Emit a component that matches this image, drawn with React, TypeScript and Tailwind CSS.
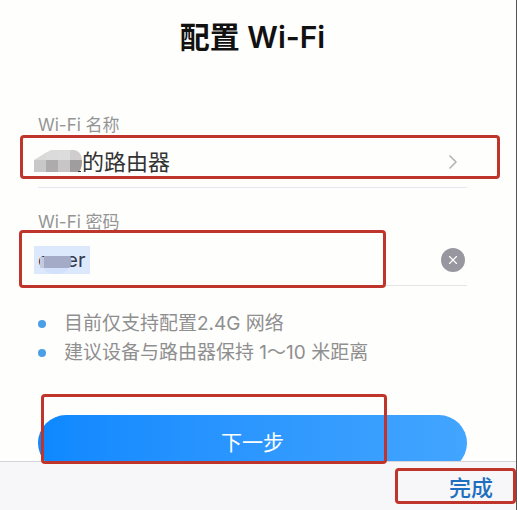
import { useState } from 'react';
import { ChevronRight, X } from 'lucide-react';

const tips = ['目前仅支持配置2.4G 网络', '建议设备与路由器保持 1～10 米距离'];

// red frame that points out a step of the guide
function Highlight({ className }: { className: string }) {
  return <div className={`pointer-events-none absolute z-20 rounded-sm border-3 border-[#c0352b] ${className}`} />;
}

function NameMosaic() {
  return (
    <svg className="h-6 w-12 shrink-0" viewBox="0 0 48 24" aria-hidden="true">
      <clipPath id="name-blob">
        <path d="M0 22V10C6 7 10 3 17 0H40C46 1 48 6 48 11C48 16 47 19 45 22Z" />
      </clipPath>
      <g clipPath="url(#name-blob)">
        <rect width="12" height="24" fill="#d9d9d9" />
        <rect x="12" width="12" height="24" fill="#dcdbdc" />
        <rect x="24" width="12" height="24" fill="#dddcdd" />
        <rect x="36" width="12" height="24" fill="#cfcdce" />
        <rect y="10" width="12" height="14" fill="#c9c8c9" />
        <rect x="12" y="10" width="12" height="14" fill="#adabac" />
        <rect x="24" y="10" width="12" height="14" fill="#c7c5c6" />
        <rect x="36" y="10" width="12" height="14" fill="#a09d9f" />
      </g>
      <path d="M44 21h3v1h-3z" fill="#333" />
    </svg>
  );
}

function PasswordMosaic() {
  return (
    <svg className="pointer-events-none absolute top-2 left-1 h-5 w-9" viewBox="0 0 36 20" aria-hidden="true">
      <path d="M5 14H31C28 19 23 20 18 20S8 19 5 14Z" fill="#d3e1fa" />
      <path d="M2 3H6V14H2Z" fill="#c3cbe2" />
      <path d="M6 2H32C34 4 34 12 31 14H6Z" fill="#a3abc6" />
    </svg>
  );
}

export default function App() {
  const [password, setPassword] = useState('c\u00a0\u00a0\u00a0er');

  return (
    <div className="relative h-screen overflow-hidden border-r border-[#555] bg-[#fefefd] font-['Inter','Noto_Sans_CJK_SC',sans-serif]">
      <main className="pt-4 pr-[49px] pl-[38px]">
        <h1 className="text-center text-[30px] leading-[42px] font-semibold text-[#111]">配置 Wi-Fi</h1>

        <form className="pt-[55px]" onSubmit={(e) => e.preventDefault()}>
          <label htmlFor="network" className="block text-[17px] leading-6 text-[#959595]">Wi-Fi 名称</label>
          <div className="relative border-b border-[#e4e7ef]">
            <button id="network" type="button" className="-ml-1 flex h-[50px] w-full items-center text-[22px] text-[#333]">
              <NameMosaic />
              <span>的路由器</span>
              <ChevronRight className="-mr-0.5 ml-auto size-6 text-[#b5b5b5]" strokeWidth={1.75} />
            </button>
            <Highlight className="-top-0.5 -right-[33px] -left-[18px] h-11" />
          </div>

          <label htmlFor="password" className="mt-[22px] block text-[17px] leading-6 text-[#959595]">Wi-Fi 密码</label>
          <div className="relative flex h-[52px] items-center justify-between border-b border-[#e5e5e8]">
            <div className="relative -ml-1">
              <input
                id="password"
                type="text"
                value={password}
                onChange={(e) => setPassword(e.target.value)}
                className="block h-7 w-14 bg-[#dce8fb] px-1 text-xl text-[#353a4d] outline-none"
              />
              <PasswordMosaic />
            </div>
            <button
              type="button"
              aria-label="清除"
              onClick={() => setPassword('')}
              className="mr-0.5 flex size-6 items-center justify-center rounded-full bg-[#98969f] text-white"
            >
              <X className="size-3.5" strokeWidth={2} />
            </button>
            <Highlight className="-top-1 right-[81px] -left-[19px] h-[58px]" />
          </div>

          <ul className="mt-[23px] text-[19px] leading-[29px] text-[#8f8f8f]">
            {tips.map((tip) => (
              <li key={tip} className="flex items-center gap-[18px]">
                <span className="size-2 shrink-0 rounded-full bg-[#4a9fe6]" />
                {tip}
              </li>
            ))}
          </ul>

          <div className="relative mt-12">
            <button type="submit" className="h-14 w-full rounded-full bg-linear-to-r from-[#0d88ff] to-[#42a5ff] text-[21px] text-white">
              下一步
            </button>
            <Highlight className="-top-[21px] right-20 left-[3px] h-[70px]" />
          </div>
        </form>
      </main>

      {/* keyboard accessory bar, covers the bottom of the page */}
      <div className="absolute inset-x-0 bottom-0 flex h-[49px] items-start justify-end border-t border-[#d5d5d9] bg-[#f7f7f9]">
        <div className="relative mt-1.5 flex h-9 items-center">
          <button type="button" className="pt-1 pr-[23px] pl-[54px] text-[22px] font-medium text-[#1f6fc0]">完成</button>
          <Highlight className="inset-0" />
        </div>
      </div>
    </div>
  );
}
